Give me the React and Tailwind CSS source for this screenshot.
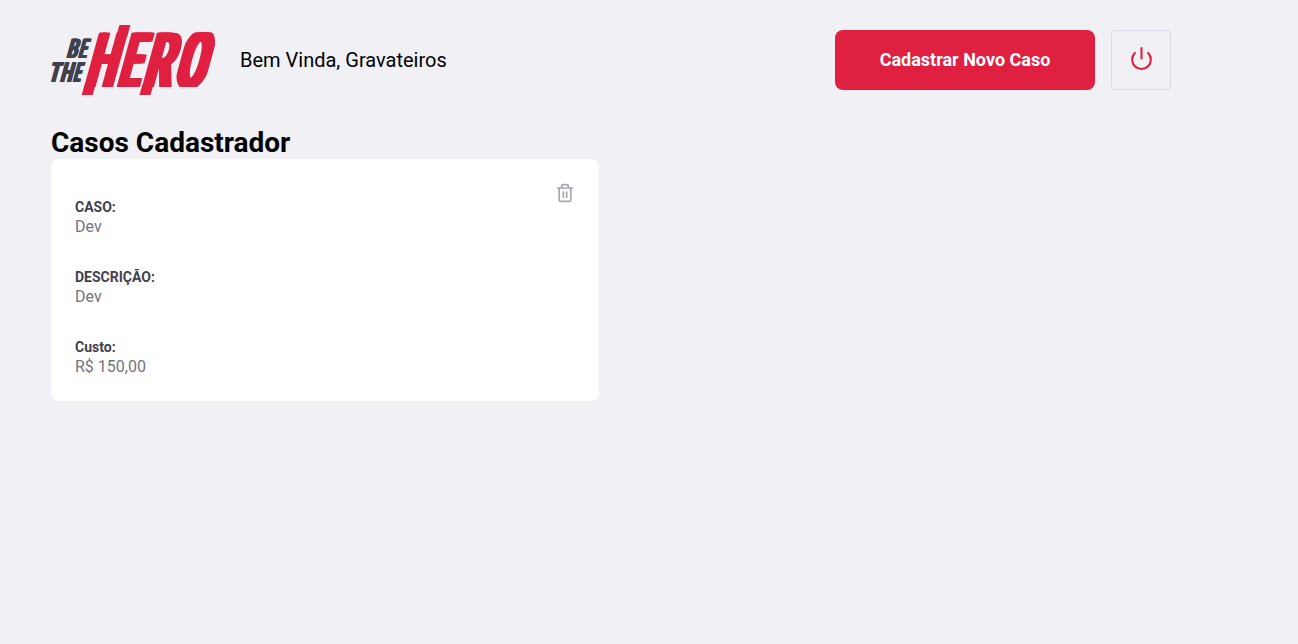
import { FiPower, FiTrash2 } from "react-icons/fi";

const SLANT = -15.4;

// Left and right ink edges of each Roboto Bold capital, in em.
const CAP = 0.711;
const INK = {
  H: [0.057, 0.649],
  E: [0.057, 0.527],
  R: [0.057, 0.615],
  O: [0.039, 0.648],
  B: [0.057, 0.597],
  T: [0.02, 0.597],
};

// A condensed, slanted capital; stacked copies thicken its stems sideways only.
function Capital({ char, x, y, width, height, spread, clip }) {
  const size = height / CAP;
  const [left, right] = INK[char];
  const sx = (width - spread) / ((right - left) * size);
  const steps = [0, 0.2, 0.4, 0.6, 0.8, 1];
  return (
    <g transform={`translate(${x} ${y}) skewX(${SLANT})`}>
      <g clipPath={clip}>
        {steps.map((s) => (
          <text
            key={s}
            transform={`translate(${s * spread - left * size * sx} 0) scale(${sx} 1)`}
            fontSize={size}
            aria-hidden={s > 0}
          >
            {char}
          </text>
        ))}
      </g>
    </g>
  );
}

function Logo() {
  return (
    <svg
      className="h-[70px] w-[165px] overflow-visible font-['Roboto',sans-serif] font-bold"
      viewBox="51 25 165 70"
    >
      <clipPath id="round-o">
        <rect x="1.5" y="-55.6" width="30.4" height="54.4" rx="6" />
      </clipPath>
      <g fill="#41414d">
        <Capital char="B" x={66.1} y={58} width={10.8} height={19.3} spread={2} />
        <Capital char="E" x={77.8} y={58} width={8.4} height={19.3} spread={2} />
        <Capital char="T" x={47.4} y={81.7} width={11.6} height={19.7} spread={2} />
        <Capital char="H" x={59.6} y={81.7} width={11.6} height={19.7} spread={2} />
        <Capital char="E" x={72.5} y={81.7} width={7.6} height={19.7} spread={2} />
      </g>
      <g fill="#e02041">
        <Capital char="H" x={83.9} y={87} width={29.4} height={54.3} spread={5.4} />
        <Capital char="E" x={116.5} y={87} width={23} height={54.3} spread={5} />
        <Capital char="R" x={141.7} y={87} width={29.6} height={54.3} spread={5.4} />
        <Capital char="O" x={171.3} y={88.2} width={33.4} height={56.8} spread={6.5} clip="url(#round-o)" />
        <g transform={`translate(0 87) skewX(${SLANT})`}>
          <rect x="83.9" y="-2" width="11" height="10" />
          <rect x="102.3" y="-62" width="11" height="12" />
          <rect x="141.7" y="-2" width="11" height="10" />
        </g>
      </g>
    </svg>
  );
}

const fields = [
  { label: "CASO:", value: "Dev" },
  { label: "DESCRIÇÃO:", value: "Dev" },
  { label: "Custo:", value: "R$ 150,00" },
];

export default function App() {
  return (
    <div className="min-h-screen bg-[#f0f0f5] pt-[25px] pl-[51px] font-['Roboto',sans-serif] text-black">
      <div className="w-[1120px]">
        <header className="flex h-[70px] items-center">
          <Logo />
          <span className="ml-6 text-xl">Bem Vinda, Gravateiros</span>
          <button className="ml-auto h-[60px] w-[260px] rounded-lg bg-[#e02041] text-lg font-bold text-white">
            Cadastrar Novo Caso
          </button>
          <button className="ml-4 flex h-[60px] w-[60px] items-center justify-center rounded border border-[#dcdce6] pb-[3px] pl-px">
            <FiPower size={25} color="#e02041" />
          </button>
        </header>
        <h1 className="mt-[31px] text-[28px] leading-[33px] font-bold">Casos Cadastrador</h1>
        <ul className="grid grid-cols-2 gap-6">
          <li className="flex h-[242px] justify-between rounded-lg bg-white p-6">
            <div className="flex flex-col gap-8 pt-4">
              {fields.map((f) => (
                <div key={f.label}>
                  <strong className="block text-sm leading-[17px] font-bold text-[#41414d]">{f.label}</strong>
                  <p className="text-base leading-[21px] text-[#737380]">{f.value}</p>
                </div>
              ))}
            </div>
            <button className="self-start">
              <FiTrash2 size={20} color="#a8a8b3" />
            </button>
          </li>
        </ul>
      </div>
    </div>
  );
}
